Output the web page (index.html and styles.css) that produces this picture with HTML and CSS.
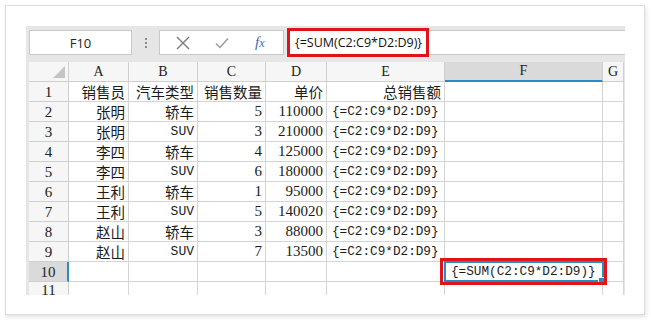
FILE: index.html
```html
<!DOCTYPE html>
<html>
<head>
<meta charset="utf-8">
<link rel="stylesheet" href="styles.css">
</head>
<body>
<div class="card">
  <div class="sheet">
    <div class="toolbar">
      <div class="namebox">F10</div>
      <div class="dots"><i></i><i></i><i></i></div>
      <div class="btns">
        <svg class="ic" width="14" height="14" viewBox="0 0 14 14"><path d="M1 1L13 13M13 1L1 13" stroke="#7a7a7a" stroke-width="1.4" fill="none"/></svg>
        <svg class="ic" width="14" height="12" viewBox="0 0 14 12"><path d="M1 6.5L5 10.5L13 1.5" stroke="#9a9a9a" stroke-width="1.5" fill="none"/></svg>
        <span class="fx">f<span class="x">x</span></span>
      </div>
      <div class="formula"><span class="ftext">{=SUM(C2:C9*D2:D9)}</span><div class="redbox fbox"></div></div>
    </div>
    <div class="grid">
      <div class="h corner"><div class="tri"></div></div><div class="h">A</div><div class="h">B</div><div class="h">C</div><div class="h">D</div><div class="h">E</div><div class="h hsel">F</div><div class="h">G</div>

      <div class="rn">1</div><div class="c r zh">销售员</div><div class="c r zh">汽车类型</div><div class="c r zh">销售数量</div><div class="c r zh">单价</div><div class="c r zh">总销售额</div><div class="c"></div><div class="c"></div>

      <div class="rn">2</div><div class="c r zh">张明</div><div class="c r zh">轿车</div><div class="c r">5</div><div class="c r">110000</div><div class="c l">{=C2:C9*D2:D9}</div><div class="c"></div><div class="c"></div>
      <div class="rn">3</div><div class="c r zh">张明</div><div class="c r m">SUV</div><div class="c r">3</div><div class="c r">210000</div><div class="c l">{=C2:C9*D2:D9}</div><div class="c"></div><div class="c"></div>
      <div class="rn">4</div><div class="c r zh">李四</div><div class="c r zh">轿车</div><div class="c r">4</div><div class="c r">125000</div><div class="c l">{=C2:C9*D2:D9}</div><div class="c"></div><div class="c"></div>
      <div class="rn">5</div><div class="c r zh">李四</div><div class="c r m">SUV</div><div class="c r">6</div><div class="c r">180000</div><div class="c l">{=C2:C9*D2:D9}</div><div class="c"></div><div class="c"></div>
      <div class="rn">6</div><div class="c r zh">王利</div><div class="c r zh">轿车</div><div class="c r">1</div><div class="c r">95000</div><div class="c l">{=C2:C9*D2:D9}</div><div class="c"></div><div class="c"></div>
      <div class="rn">7</div><div class="c r zh">王利</div><div class="c r m">SUV</div><div class="c r">5</div><div class="c r">140020</div><div class="c l">{=C2:C9*D2:D9}</div><div class="c"></div><div class="c"></div>
      <div class="rn">8</div><div class="c r zh">赵山</div><div class="c r zh">轿车</div><div class="c r">3</div><div class="c r">88000</div><div class="c l">{=C2:C9*D2:D9}</div><div class="c"></div><div class="c"></div>
      <div class="rn">9</div><div class="c r zh">赵山</div><div class="c r m">SUV</div><div class="c r">7</div><div class="c r">13500</div><div class="c l">{=C2:C9*D2:D9}</div><div class="c"></div><div class="c"></div>
      <div class="rn rsel">10</div><div class="c"></div><div class="c"></div><div class="c"></div><div class="c"></div><div class="c"></div><div class="c sel"><span class="seltext">{=SUM(C2:C9*D2:D9)}</span><div class="selborder"></div><div class="handle"></div><div class="redbox cbox"></div></div><div class="c"></div>
      <div class="rn last">11</div><div class="c"></div><div class="c"></div><div class="c"></div><div class="c"></div><div class="c"></div><div class="c"></div><div class="c"></div>
    </div>
  </div>
</div>
</body>
</html>
```
FILE: styles.css
```css
html, body {
  margin: 0;
  padding: 0;
  background: #ffffff;
}
.card {
  margin: 5px;
  width: 640px;
  height: 310px;
  box-sizing: border-box;
  border: 1px solid #dedede;
  box-shadow: 1px 2px 4px rgba(0,0,0,0.12);
  padding: 20px 19px 19px 20px;
  background: #fff;
}
.sheet {
  width: 599px;
  height: 269px;
  background: #e6e6e6;
  padding: 4px 0 0 3px;
  box-sizing: border-box;
  overflow: hidden;
}
.toolbar {
  display: flex;
  height: 25px;
  margin-bottom: 7px;
  align-items: stretch;
}
.namebox {
  width: 103px;
  box-sizing: border-box;
  background: #fff;
  border: 1px solid #c8c8c8;
  display: flex;
  align-items: center;
  justify-content: center;
  font-family: "Open Sans", "Noto Sans", sans-serif;
  font-size: 13px;
  color: #222;
  padding-top: 1px;
}
.dots {
  width: 27px;
  display: flex;
  flex-direction: column;
  align-items: center;
  justify-content: center;
  gap: 2px;
}
.dots i {
  display: block;
  width: 2px;
  height: 2px;
  background: #8a8a8a;
}
.btns {
  width: 125px;
  box-sizing: border-box;
  background: #fff;
  border: 1px solid #c8c8c8;
  display: flex;
  align-items: center;
  padding-left: 16px;
  gap: 25px;
}
.fx {
  font-family: "Liberation Serif", serif;
  font-style: italic;
  font-size: 15px;
  color: #3a6db5;
  margin-left: 1px;
}
.fx .x {
  font-size: 12px;
}
.formula {
  flex: 1;
  background: #fff;
  border: 1px solid #c8c8c8;
  border-right: none;
  margin-left: 3px;
  position: relative;
  display: flex;
  align-items: center;
  padding-left: 7px;
  font-family: "Open Sans", "Noto Sans", sans-serif;
  font-size: 12.5px;
  color: #111;
}
.redbox {
  position: absolute;
  border: 3px solid #e0131a;
  box-sizing: border-box;
}
.fbox {
  left: -1px;
  top: -3px;
  width: 142px;
  height: 29px;
}
.grid {
  display: grid;
  grid-template-columns: 40px 60px 69px 68px 61px 118px 158px 21px;
  grid-auto-rows: 20px;
  width: 595px;
  background: #fff;
}
.grid > div {
  box-sizing: border-box;
  border-right: 1px solid #d4d4d4;
  border-bottom: 1px solid #d4d4d4;
  font-family: "Liberation Serif", "Noto Sans CJK SC", serif;
  font-size: 15px;
  color: #1a1a1a;
  display: flex;
  align-items: center;
  white-space: nowrap;
}
.grid > .h {
  background: #f6f6f6;
  justify-content: center;
  color: #222;
  border-color: #cfcfcf;
  font-size: 14px;
}
.corner {
  position: relative;
}
.tri {
  position: absolute;
  right: 3px;
  bottom: 3px;
  width: 0;
  height: 0;
  border-left: 12px solid transparent;
  border-bottom: 12px solid #c4c4c4;
}
.grid > .hsel {
  background: #dadada;
  border-bottom: 2px solid #2a8ac4;
}
.grid > .rn {
  background: #f6f6f6;
  justify-content: center;
  color: #222;
  border-color: #cfcfcf;
  padding-top: 1px;
}
.grid > .rn.last {
  align-items: flex-start;
  padding-top: 0;
  line-height: 17px;
}
.grid > .rsel {
  background: #dadada;
  border-right: 2px solid #2a8ac4;
}
.grid > .r {
  justify-content: flex-end;
  padding-right: 3px;
}
.grid > .m {
  font-family: "Liberation Mono", monospace;
  font-size: 13px;
}
.grid > .l {
  padding-left: 5px;
  font-family: "Liberation Mono", monospace;
  font-size: 12.7px;
}
.grid > .zh {
  font-family: "Noto Sans CJK SC", sans-serif;
  font-size: 14.5px;
}
.grid > .sel {
  position: relative;
  overflow: visible;
  font-family: "Liberation Mono", monospace;
  font-size: 12.7px;
}
.seltext {
  position: relative;
  z-index: 2;
  padding-left: 6px;
}
.selborder {
  position: absolute;
  left: -1px;
  top: -1px;
  right: -2px;
  bottom: -1px;
  border: 2px solid #2a8ac4;
  z-index: 1;
}
.handle {
  position: absolute;
  right: -3px;
  bottom: -3px;
  width: 5px;
  height: 5px;
  background: #2a8ac4;
  border: 1px solid #fff;
  z-index: 3;
}
.cbox {
  left: -5px;
  top: -4px;
  width: 167px;
  height: 27px;
  z-index: 4;
}
```
